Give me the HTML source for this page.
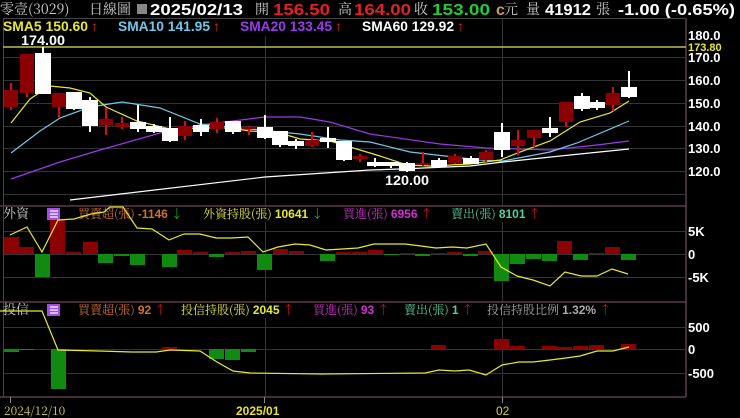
<!DOCTYPE html>
<html><head><meta charset="utf-8"><style>
html,body{margin:0;padding:0;background:#000;width:740px;height:418px;overflow:hidden}
svg{display:block}
text{font-family:"Liberation Sans","Noto Sans CJK TC",sans-serif}
.cj{font-family:"Noto Serif CJK SC","Noto Sans CJK TC",serif}
.b{font-weight:bold}
</style></head><body>
<svg width="740" height="418" viewBox="0 0 740 418" xmlns="http://www.w3.org/2000/svg">
<rect width="740" height="418" fill="#000"/>
<!-- header -->
<text x="0" y="14" font-size="14" fill="#ccc" class="cj">零壹(3029)</text>
<text x="89" y="14" font-size="14" fill="#ccc" class="cj">日線圖</text>
<rect x="137" y="4" width="10" height="10" fill="#888"/>
<text x="150" y="15" font-size="16" fill="#fff" class="b" textLength="93" lengthAdjust="spacingAndGlyphs">2025/02/13</text>
<text x="255" y="14" font-size="14" fill="#ccc" class="cj">開</text>
<text x="273" y="15" font-size="16" fill="#e52020" class="b" textLength="57" lengthAdjust="spacingAndGlyphs">156.50</text>
<text x="338" y="14" font-size="14" fill="#ccc" class="cj">高</text>
<text x="354" y="15" font-size="16" fill="#e52020" class="b" textLength="57" lengthAdjust="spacingAndGlyphs">164.00</text>
<text x="414" y="14" font-size="14" fill="#ccc" class="cj">收</text>
<text x="432" y="15" font-size="16" fill="#22cc33" class="b" textLength="58" lengthAdjust="spacingAndGlyphs">153.00</text>
<text x="496" y="15" font-size="16" fill="#c8a050" class="b">c</text>
<text x="504" y="14" font-size="14" fill="#ccc" class="cj">元</text>
<text x="526" y="14" font-size="14" fill="#ccc" class="cj">量</text>
<text x="545" y="15" font-size="16" fill="#fff" class="b" textLength="46" lengthAdjust="spacingAndGlyphs">41912</text>
<text x="596" y="14" font-size="14" fill="#ccc" class="cj">張</text>
<text x="618" y="15" font-size="16" fill="#fff" class="b" textLength="117" lengthAdjust="spacingAndGlyphs">-1.00 (-0.65%)</text>

<!-- panel frames -->
<g stroke="#333" stroke-width="1" fill="none">
<line x1="3" y1="57.5" x2="685" y2="57.5"/><line x1="3" y1="80.5" x2="685" y2="80.5"/>
<line x1="3" y1="103.5" x2="685" y2="103.5"/><line x1="3" y1="126.5" x2="685" y2="126.5"/>
<line x1="3" y1="148.5" x2="685" y2="148.5"/><line x1="3" y1="171.5" x2="685" y2="171.5"/>
<line x1="3" y1="194.5" x2="685" y2="194.5"/>
<line x1="265.5" y1="36" x2="265.5" y2="206"/><line x1="502.5" y1="18" x2="502.5" y2="206"/>
<line x1="3" y1="231.5" x2="685" y2="231.5"/><line x1="3" y1="254.5" x2="685" y2="254.5"/><line x1="3" y1="277.5" x2="685" y2="277.5"/>
<line x1="265.5" y1="222" x2="265.5" y2="302"/><line x1="502.5" y1="222" x2="502.5" y2="302"/>
<line x1="3" y1="327.5" x2="685" y2="327.5"/><line x1="3" y1="349.5" x2="685" y2="349.5"/><line x1="3" y1="373.5" x2="685" y2="373.5"/>
<line x1="265.5" y1="318" x2="265.5" y2="397"/><line x1="502.5" y1="318" x2="502.5" y2="397"/>
<line x1="3" y1="18.5" x2="685" y2="18.5" stroke="#444"/>
<line x1="3.5" y1="18" x2="3.5" y2="397" stroke="#444"/>
</g>
<g stroke="#5a3a4a" stroke-width="1.5">
<line x1="0" y1="206" x2="686" y2="206"/><line x1="0" y1="302" x2="686" y2="302"/>
<line x1="0" y1="397" x2="686" y2="397"/><line x1="686" y1="18" x2="686" y2="397"/>
</g>
<line x1="3" y1="47" x2="686" y2="47" stroke="#b8c050" stroke-width="1.5"/>

<!-- legend -->
<text x="3" y="31" font-size="14" class="b" fill="#e8e830" textLength="85" lengthAdjust="spacingAndGlyphs">SMA5 150.60</text>
<text x="91" y="31" font-size="14" class="b" fill="#e02020">↑</text>
<text x="118" y="31" font-size="14" class="b" fill="#70c8e8" textLength="92" lengthAdjust="spacingAndGlyphs">SMA10 141.95</text>
<text x="213" y="31" font-size="14" class="b" fill="#e02020">↑</text>
<text x="240" y="31" font-size="14" class="b" fill="#9a3ae8" textLength="92" lengthAdjust="spacingAndGlyphs">SMA20 133.45</text>
<text x="335" y="31" font-size="14" class="b" fill="#e02020">↑</text>
<text x="362" y="31" font-size="14" class="b" fill="#fff" textLength="92" lengthAdjust="spacingAndGlyphs">SMA60 129.92</text>
<text x="457" y="31" font-size="14" class="b" fill="#e02020">↑</text>
<text x="21" y="45" font-size="14" class="b" fill="#fff" textLength="44" lengthAdjust="spacingAndGlyphs">174.00</text>
<text x="385" y="185" font-size="14" class="b" fill="#fff" textLength="44" lengthAdjust="spacingAndGlyphs">120.00</text>

<!-- right axis -->
<g font-size="13" class="b" fill="#fff">
<text x="688" y="40">180.0</text>
<text x="688" y="62">170.0</text><text x="688" y="85">160.0</text><text x="688" y="108">150.0</text>
<text x="688" y="131">140.0</text><text x="688" y="153">130.0</text><text x="688" y="176">120.0</text>
<text x="688" y="236">5K</text><text x="688" y="259">0</text><text x="688" y="282">-5K</text>
<text x="688" y="332">500</text><text x="688" y="354">0</text><text x="688" y="378">-500</text>
</g>
<text x="688" y="51" font-size="11" class="b" fill="#e8e830">173.80</text>

<!-- MAs -->
<g fill="none" stroke-width="1.2">
<polyline stroke="#fff" points="70,200 265,177 370,170 400,169 470,166 503,162 570,155 629,149"/>
<polyline stroke="#9a3ae8" points="11,179 60,162 100,150 160,133 200,125 265,117 300,117 330,122 370,134 440,144 486,148 550,150 597,145 629,141"/>
<polyline stroke="#70c8e8" points="11,153 40,131 60,118 90,107 122,102 160,108 200,124 250,129 300,134 340,140 370,142 410,152 480,160 503,161 550,152 577,143 629,121"/>
<polyline stroke="#e8e830" points="11,123 30,99 50,86 70,88 90,93 106,107 137,121 170,129 200,128 230,128 250,131 280,133 300,139 330,141 360,150 380,156 407,165 430,166 470,164 500,160 520,152 550,141 580,122 610,113 629,101"/>
</g>

<!-- candles -->
<g stroke-width="2">
<g stroke="#d01010" fill="#8b0000">
<line x1="11" y1="83" x2="11" y2="110"/><line x1="27" y1="54" x2="27" y2="97"/><line x1="59" y1="93" x2="59" y2="118"/>
<line x1="106" y1="108" x2="106" y2="135"/><line x1="122" y1="117" x2="122" y2="129"/><line x1="185" y1="121" x2="185" y2="140"/>
<line x1="217" y1="118" x2="217" y2="133"/><line x1="249" y1="126" x2="249" y2="135"/><line x1="312" y1="132" x2="312" y2="147"/>
<line x1="360" y1="154" x2="360" y2="162"/><line x1="423" y1="152" x2="423" y2="166"/><line x1="455" y1="154" x2="455" y2="164"/>
<line x1="486" y1="150" x2="486" y2="162"/><line x1="518" y1="130" x2="518" y2="155"/><line x1="534" y1="130" x2="534" y2="147"/>
<line x1="566" y1="102" x2="566" y2="127"/><line x1="613" y1="87" x2="613" y2="111"/>
</g>
<g fill="#8b0000" stroke="none">
<rect x="4" y="90" width="14" height="17"/><rect x="20" y="54" width="14" height="39"/><rect x="52" y="93" width="14" height="14"/>
<rect x="99" y="119" width="14" height="6"/><rect x="115" y="123" width="14" height="4"/><rect x="178" y="126" width="14" height="10"/>
<rect x="210" y="122" width="14" height="7"/><rect x="242" y="127" width="14" height="2"/><rect x="305" y="140" width="14" height="6"/>
<rect x="353" y="156" width="14" height="3"/><rect x="416" y="163" width="14" height="2"/><rect x="448" y="156" width="14" height="7"/>
<rect x="479" y="152" width="14" height="8"/><rect x="511" y="140" width="14" height="6"/><rect x="527" y="130" width="14" height="8"/>
<rect x="559" y="102" width="14" height="20"/><rect x="606" y="93" width="14" height="12"/>
</g>
<g stroke="#fff" fill="#fff">
<line x1="43" y1="47" x2="43" y2="93"/><rect x="36" y="54" width="14" height="39"/>
<line x1="74" y1="93" x2="74" y2="110"/><rect x="67" y="93" width="14" height="15"/>
<line x1="90" y1="97" x2="90" y2="132"/><rect x="83" y="101" width="14" height="24"/>
<line x1="138" y1="105" x2="138" y2="132"/><rect x="131" y="123" width="14" height="5"/>
<line x1="154" y1="124" x2="154" y2="133"/><rect x="147" y="127" width="14" height="4"/>
<line x1="170" y1="117" x2="170" y2="142"/><rect x="163" y="129" width="14" height="11"/>
<line x1="201" y1="119" x2="201" y2="136"/><rect x="194" y="126" width="14" height="5"/>
<line x1="233" y1="122" x2="233" y2="134"/><rect x="226" y="122" width="14" height="9"/>
<line x1="265" y1="115" x2="265" y2="139"/><rect x="258" y="128" width="14" height="9"/>
<line x1="280" y1="132" x2="280" y2="147"/><rect x="273" y="132" width="14" height="12"/>
<line x1="296" y1="139" x2="296" y2="149"/><rect x="289" y="142" width="14" height="3"/>
<line x1="328" y1="127" x2="328" y2="148"/><rect x="321" y="139" width="14" height="2"/>
<line x1="344" y1="142" x2="344" y2="161"/><rect x="337" y="142" width="14" height="17"/>
<line x1="375" y1="158" x2="375" y2="167"/><rect x="368" y="163" width="14" height="2"/>
<line x1="391" y1="162" x2="391" y2="168"/><rect x="384" y="163" width="14" height="2"/>
<line x1="407" y1="162" x2="407" y2="172"/><rect x="400" y="164" width="14" height="6"/>
<line x1="439" y1="158" x2="439" y2="168"/><rect x="432" y="161" width="14" height="5"/>
<line x1="471" y1="156" x2="471" y2="164"/><rect x="464" y="159" width="14" height="4"/>
<line x1="502" y1="123" x2="502" y2="157"/><rect x="495" y="133" width="14" height="16"/>
<line x1="550" y1="117" x2="550" y2="137"/><rect x="543" y="129" width="14" height="3"/>
<line x1="582" y1="93" x2="582" y2="111"/><rect x="575" y="97" width="14" height="11"/>
<line x1="597" y1="100" x2="597" y2="110"/><rect x="590" y="103" width="14" height="4"/>
<line x1="629" y1="71" x2="629" y2="98"/><rect x="622" y="88" width="14" height="8"/>
</g>
</g>

<!-- 外資 panel -->
<text x="3" y="218" font-size="13" fill="#ccc" class="cj">外資</text>
<rect x="47" y="208" width="13" height="12" fill="#a050e0"/>
<g stroke="#fff" stroke-width="1.2"><line x1="50" y1="211" x2="58" y2="211"/><line x1="50" y1="214" x2="58" y2="214"/><line x1="50" y1="217" x2="58" y2="217"/></g>
<text x="78" y="218" font-size="12" class="cj" fill="#d07030">買賣超(張) <tspan class="b" font-family="Liberation Sans">-1146</tspan> <tspan fill="#22cc33" class="b">↓</tspan></text>
<text x="203" y="218" font-size="12" class="cj" fill="#e8e830">外資持股(張) <tspan class="b" font-family="Liberation Sans">10641</tspan> <tspan fill="#22cc33" class="b">↓</tspan></text>
<text x="343" y="218" font-size="12" class="cj" fill="#d030d0">買進(張) <tspan class="b" font-family="Liberation Sans">6956</tspan> <tspan fill="#e02020" class="b">↑</tspan></text>
<text x="451" y="218" font-size="12" class="cj" fill="#50d0a0">賣出(張) <tspan class="b" font-family="Liberation Sans">8101</tspan> <tspan fill="#e02020" class="b">↑</tspan></text>
<g fill="#8b0000">
<rect x="4" y="237" width="15" height="17"/><rect x="19" y="247" width="15" height="7"/>
<rect x="50" y="220" width="15" height="34"/><rect x="66" y="252" width="15" height="2"/>
<rect x="83" y="242" width="15" height="12"/><rect x="177" y="250" width="15" height="4"/>
<rect x="193" y="252" width="15" height="2"/><rect x="225" y="252" width="15" height="2"/>
<rect x="241" y="251" width="15" height="3"/><rect x="273" y="249" width="15" height="5"/>
<rect x="289" y="251" width="15" height="3"/><rect x="336" y="252" width="15" height="2"/>
<rect x="352" y="252" width="15" height="2"/><rect x="368" y="250" width="15" height="4"/>
<rect x="400" y="253" width="15" height="1"/><rect x="431" y="253" width="15" height="1"/>
<rect x="447" y="252" width="15" height="2"/><rect x="478" y="251" width="15" height="3"/>
<rect x="557" y="241" width="15" height="13"/><rect x="589" y="253" width="15" height="1"/>
<rect x="605" y="247" width="15" height="7"/>
</g>
<g fill="#108a10">
<rect x="35" y="254" width="15" height="23"/><rect x="98" y="254" width="15" height="9"/>
<rect x="114" y="254" width="15" height="2"/><rect x="130" y="254" width="15" height="11"/>
<rect x="162" y="254" width="15" height="13"/><rect x="209" y="254" width="15" height="3"/>
<rect x="257" y="254" width="15" height="16"/><rect x="320" y="254" width="15" height="7"/>
<rect x="384" y="254" width="15" height="1"/><rect x="415" y="254" width="15" height="2"/>
<rect x="463" y="254" width="15" height="2"/><rect x="494" y="254" width="15" height="27"/>
<rect x="510" y="254" width="15" height="10"/><rect x="526" y="254" width="15" height="5"/>
<rect x="542" y="254" width="15" height="7"/><rect x="573" y="254" width="15" height="6"/>
<rect x="621" y="254" width="15" height="6"/>
</g>
<polyline fill="none" stroke="#e8e830" stroke-width="1.2" points="10,235 27,227 42,252 58,220 74,219 91,214 104,212 110,207 123,207 137,228 152,229 169,240 184,234 200,234 216,238 231,238 248,237 263,252 278,247 295,244 310,245 326,250 342,249 358,248 374,244 389,244 405,244 421,246 436,248 452,247 467,248 486,244 501,267 517,276 533,280 550,286 565,272 581,276 597,276 612,269 628,274"/>

<!-- 投信 panel -->
<text x="3" y="314" font-size="13" fill="#ccc" class="cj">投信</text>
<rect x="47" y="304" width="13" height="12" fill="#a050e0"/>
<g stroke="#fff" stroke-width="1.2"><line x1="50" y1="307" x2="58" y2="307"/><line x1="50" y1="310" x2="58" y2="310"/><line x1="50" y1="313" x2="58" y2="313"/></g>
<text x="78" y="314" font-size="12" class="cj" fill="#d07030">買賣超(張) <tspan class="b" font-family="Liberation Sans">92</tspan> <tspan fill="#e02020" class="b">↑</tspan></text>
<text x="181" y="314" font-size="12" class="cj" fill="#e8e830">投信持股(張) <tspan class="b" font-family="Liberation Sans">2045</tspan> <tspan fill="#e02020" class="b">↑</tspan></text>
<text x="313" y="314" font-size="12" class="cj" fill="#d030d0">買進(張) <tspan class="b" font-family="Liberation Sans">93</tspan> <tspan fill="#e02020" class="b">↑</tspan></text>
<text x="404" y="314" font-size="12" class="cj" fill="#50d0a0">賣出(張) <tspan class="b" font-family="Liberation Sans">1</tspan> <tspan fill="#e02020" class="b">↑</tspan></text>
<text x="487" y="314" font-size="12" class="cj" fill="#aaa">投信持股比例 <tspan class="b" font-family="Liberation Sans">1.32%</tspan> <tspan fill="#e02020" class="b">↑</tspan></text>
<g fill="#108a10">
<rect x="4" y="349" width="15" height="3"/><rect x="19" y="349" width="15" height="1"/>
<rect x="51" y="349" width="15" height="40"/><rect x="209" y="349" width="15" height="10"/>
<rect x="225" y="349" width="15" height="11"/><rect x="241" y="349" width="15" height="3"/>
</g>
<g fill="#8b0000">
<rect x="162" y="347" width="15" height="2"/><rect x="431" y="345" width="15" height="4"/>
<rect x="494" y="339" width="15" height="10"/><rect x="510" y="346" width="15" height="3"/>
<rect x="542" y="346" width="15" height="3"/><rect x="557" y="347" width="15" height="2"/>
<rect x="573" y="346" width="15" height="3"/><rect x="589" y="345" width="15" height="4"/>
<rect x="621" y="344" width="15" height="5"/>
</g>
<polyline fill="none" stroke="#e8e830" stroke-width="1.2" points="0,311 42,311 58,350 99,351 132,352 156,352 170,350 200,351 217,362 233,371 250,373 321,374 425,373 439,370 455,371 469,370 486,375 502,365 519,362 533,362 550,360 566,358 580,356 597,351 613,351 629,347"/>

<!-- date axis -->
<g stroke="#888" stroke-width="1"><line x1="10.5" y1="397" x2="10.5" y2="403"/><line x1="264.5" y1="397" x2="264.5" y2="403"/><line x1="502.5" y1="397" x2="502.5" y2="403"/></g>
<text x="4" y="415" font-size="12" fill="#d8d030" class="cj">2024/12/10</text>
<text x="236" y="415" font-size="12" fill="#e8e030" class="b">2025/01</text>
<text x="496" y="415" font-size="12" fill="#d8d030">02</text>
</svg>
</body></html>
